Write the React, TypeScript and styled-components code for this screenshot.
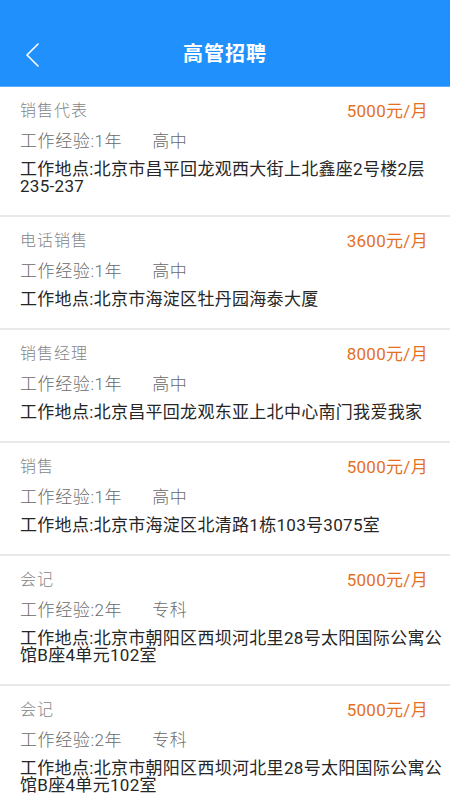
import React from "react";
import styled, { createGlobalStyle } from "styled-components";

const GlobalStyle = createGlobalStyle`
  html, body {
    margin: 0;
    padding: 0;
    background: #ffffff;
    overflow: hidden;
  }
  body {
    font-family: Roboto, "Noto Sans CJK SC", sans-serif;
  }
`;

const Page = styled.div`
  width: 450px;
  height: 800px;
  overflow: hidden;
  background: #ffffff;
`;

const Header = styled.header`
  box-sizing: border-box;
  height: 87px;
  padding-top: 20px;
  background: #1f90fc;
  display: grid;
  grid-template-columns: 1fr auto 1fr;
  align-items: center;
  border-bottom: 1px solid #5aaefc;
`;

const BackButton = styled.button`
  justify-self: start;
  margin-left: 22px;
  margin-top: 4px;
  padding: 0;
  border: 0;
  background: transparent;
  width: 20px;
  height: 26px;
  display: flex;
  align-items: center;
  justify-content: center;
  cursor: pointer;
`;

const Title = styled.h1`
  margin: 0;
  color: #ffffff;
  font-family: "Noto Sans CJK SC", serif;
  font-weight: 700;
  font-size: 20px;
  letter-spacing: 1px;
  line-height: 28px;
`;

const List = styled.ul`
  list-style: none;
  margin: 0;
  padding: 0;
`;

const Item = styled.li`
  padding: 12px 0 20px 20px;
  border-bottom: 2px solid #e9e9e9;
  display: flex;
  flex-direction: column;
`;

const TopRow = styled.div`
  display: flex;
  justify-content: space-between;
  align-items: center;
  height: 20px;
  padding-right: 22px;
`;

const JobName = styled.span`
  font-size: 16px;
  letter-spacing: 1px;
  color: #858585;
  font-weight: 300;
`;

const Salary = styled.span`
  font-size: 17px;
  color: #e5701e;
  letter-spacing: 0.3px;
`;

const InfoRow = styled.div`
  margin-top: 10px;
  height: 20px;
  display: flex;
  align-items: center;
  gap: 30px;
  font-size: 17px;
  letter-spacing: 0.6px;
  color: #6a6a6a;
  font-weight: 300;
`;

const Address = styled.p`
  margin: 12px 0 0;
  font-size: 17px;
  line-height: 17px;
  letter-spacing: 0.3px;
  color: #262626;
`;

type Job = {
  name: string;
  salary: string;
  years: string;
  edu: string;
  address: string;
};

const jobs: Job[] = [
  {
    name: "销售代表",
    salary: "5000元/月",
    years: "1年",
    edu: "高中",
    address: "北京市昌平回龙观西大街上北鑫座2号楼2层235-237",
  },
  {
    name: "电话销售",
    salary: "3600元/月",
    years: "1年",
    edu: "高中",
    address: "北京市海淀区牡丹园海泰大厦",
  },
  {
    name: "销售经理",
    salary: "8000元/月",
    years: "1年",
    edu: "高中",
    address: "北京昌平回龙观东亚上北中心南门我爱我家",
  },
  {
    name: "销售",
    salary: "5000元/月",
    years: "1年",
    edu: "高中",
    address: "北京市海淀区北清路1栋103号3075室",
  },
  {
    name: "会记",
    salary: "5000元/月",
    years: "2年",
    edu: "专科",
    address: "北京市朝阳区西坝河北里28号太阳国际公寓公馆B座4单元102室",
  },
  {
    name: "会记",
    salary: "5000元/月",
    years: "2年",
    edu: "专科",
    address: "北京市朝阳区西坝河北里28号太阳国际公寓公馆B座4单元102室",
  },
];

export default function App() {
  return (
    <Page>
      <GlobalStyle />
      <Header>
        <BackButton aria-label="返回">
          <svg width="14" height="24" viewBox="0 0 14 24" fill="none">
            <polyline
              points="13,1 2,12 13,23"
              stroke="#ffffff"
              strokeWidth="1.6"
              strokeLinecap="round"
              strokeLinejoin="round"
            />
          </svg>
        </BackButton>
        <Title>高管招聘</Title>
        <span />
      </Header>
      <List>
        {jobs.map((job, i) => (
          <Item key={i}>
            <TopRow>
              <JobName>{job.name}</JobName>
              <Salary>{job.salary}</Salary>
            </TopRow>
            <InfoRow>
              <span>工作经验:{job.years}</span>
              <span>{job.edu}</span>
            </InfoRow>
            <Address>工作地点:{job.address}</Address>
          </Item>
        ))}
      </List>
    </Page>
  );
}
